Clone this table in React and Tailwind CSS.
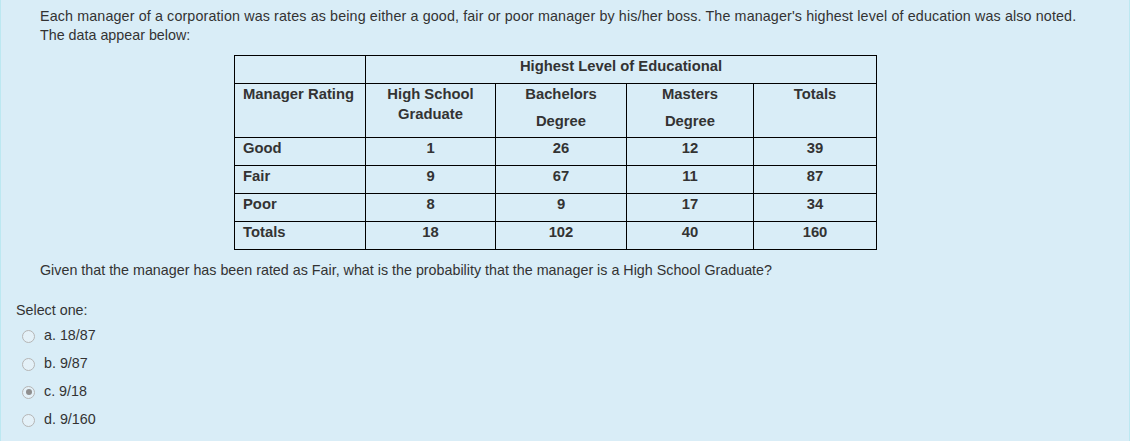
const rows = [
  ["Good", "1", "26", "12", "39"],
  ["Fair", "9", "67", "11", "87"],
  ["Poor", "8", "9", "17", "34"],
  ["Totals", "18", "102", "40", "160"],
];

const options = [
  { key: "a", label: "18/87" },
  { key: "b", label: "9/87" },
  { key: "c", label: "9/18", checked: true },
  { key: "d", label: "9/160" },
];

function Radio({ checked }) {
  return (
    <span className="flex h-[13px] w-[13px] items-center justify-center rounded-full border border-[#b5b5b5] bg-[#e4f1f8]">
      {checked ? <span className="h-[6px] w-[6px] rounded-full bg-[#8f8f8f]" /> : null}
    </span>
  );
}

export default function App() {
  const cell = "border border-black align-top px-2 h-[28px] leading-5";
  return (
    <div
      className="w-[1130px] min-h-[441px] bg-[#d9edf7] border-x border-[#bce8f1] text-[#333] text-[14.3px]"
      style={{ fontFamily: '"Liberation Sans", Arial, sans-serif' }}
    >
      <div className="pl-[39px] pt-[7px] leading-[19px]">
        <p className="tracking-[0.13px]">
          Each manager of a corporation was rates as being either a good, fair or poor manager by his/her boss. The
          manager's highest level of education was also noted.
        </p>
        <p>The data appear below:</p>
      </div>

      <table className="ml-[233px] mt-[10px] w-[642px] table-fixed border-collapse font-bold text-[14.8px]">
        <colgroup>
          <col className="w-[131px]" />
          <col className="w-[130px]" />
          <col className="w-[131px]" />
          <col className="w-[127px]" />
          <col className="w-[123px]" />
        </colgroup>
        <tbody>
          <tr>
            <td className={cell} />
            <td colSpan={4} className={cell + " text-center"}>
              Highest Level of Educational
            </td>
          </tr>
          <tr>
            <td className="border border-black align-top px-2 h-[54px] leading-5">Manager Rating</td>
            <td className="border border-black align-top text-center leading-5">
              <div>High School</div>
              <div>Graduate</div>
            </td>
            <td className="border border-black align-top text-center leading-5">
              <div>Bachelors</div>
              <div className="mt-[7px]">Degree</div>
            </td>
            <td className="border border-black align-top text-center leading-5">
              <div>Masters</div>
              <div className="mt-[7px]">Degree</div>
            </td>
            <td className="border border-black align-top text-center leading-5">Totals</td>
          </tr>
          {rows.map((r) => (
            <tr key={r[0]}>
              {r.map((v, i) => (
                <td key={i} className={cell + (i === 0 ? "" : " text-center")}>
                  {v}
                </td>
              ))}
            </tr>
          ))}
        </tbody>
      </table>

      <p className="pl-[39px] mt-[10px] leading-5">
        Given that the manager has been rated as Fair, what is the probability that the manager is a High School Graduate?
      </p>

      <div className="pl-[15px] mt-[20px]">
        <div className="leading-5">Select one:</div>
        <div className="mt-[2px] flex flex-col">
          {options.map((o) => (
            <label key={o.key} className="flex h-[28px] items-center">
              <span className="ml-[6px] mr-[9px]">
                <Radio checked={o.checked} />
              </span>
              <span>
                {o.key}. {o.label}
              </span>
            </label>
          ))}
        </div>
      </div>
    </div>
  );
}
